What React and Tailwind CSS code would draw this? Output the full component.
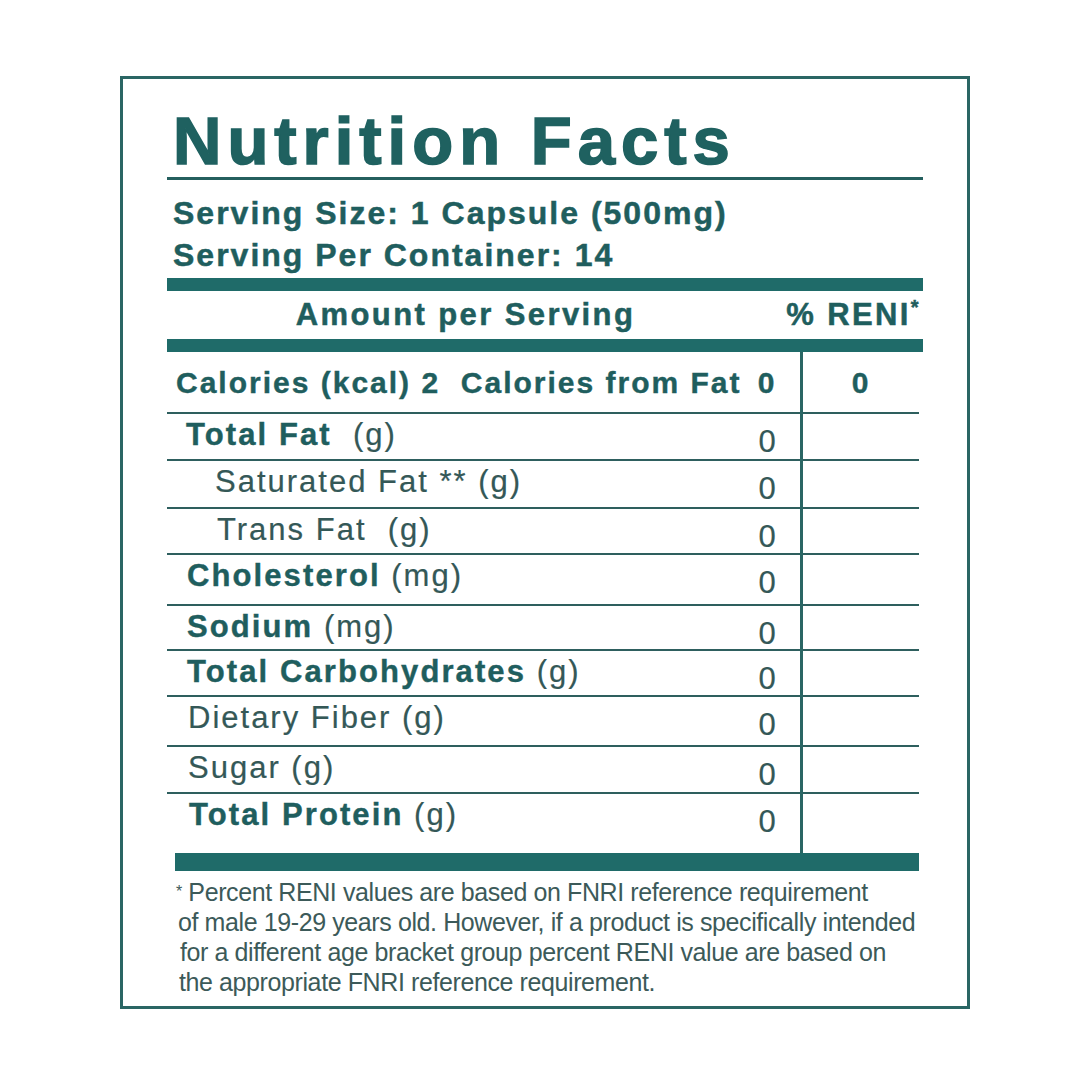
import React from 'react';

const rows = [
  { bold: 'Total Fat', rest: '  (g)', indent: 'pl-[19px]', h: 'h-[47px]' },
  { bold: '', rest: 'Saturated Fat ** (g)', indent: 'pl-[48px]', h: 'h-[48px]' },
  { bold: '', rest: 'Trans Fat  (g)', indent: 'pl-[50px]', h: 'h-[46px]' },
  { bold: 'Cholesterol', rest: ' (mg)', indent: 'pl-[20px]', h: 'h-[51px]' },
  { bold: 'Sodium', rest: ' (mg)', indent: 'pl-[20px]', h: 'h-[45px]' },
  { bold: 'Total Carbohydrates', rest: ' (g)', indent: 'pl-[20px]', h: 'h-[46px]' },
  { bold: '', rest: 'Dietary Fiber (g)', indent: 'pl-[21px]', h: 'h-[50px]' },
  { bold: '', rest: 'Sugar (g)', indent: 'pl-[21px]', h: 'h-[47px]' },
  { bold: 'Total Protein', rest: ' (g)', indent: 'pl-[22px]', h: 'h-[61px]' },
];

export default function App() {
  return (
    <div className="w-[1080px] h-[1080px] bg-white overflow-hidden font-['Liberation_Sans',Arial,sans-serif]">
      <div className="ml-[120px] mt-[76px] w-[850px] h-[933px] border-[3px] border-[#2a6664]">
        <div className="ml-[44px] w-[756px]">
          {/* Title */}
          <div className="pt-[30px] h-[98px] leading-[64px] text-[67px] font-bold tracking-[6px] text-[#1f6160] [-webkit-text-stroke:1.6px_#1f6160] pl-[6px] whitespace-nowrap">
            Nutrition Facts
          </div>
          <div className="h-[3px] bg-[#245f5e]" />

          {/* Serving info */}
          <div className="pt-[12px] pl-[6px] text-[32px] font-bold tracking-[2px] text-[#1f5e5e] [-webkit-text-stroke:0.5px_#1f5e5e] leading-[42px] whitespace-nowrap">
            <div>Serving Size: 1 Capsule (500mg)</div>
            <div>Serving Per Container: 14</div>
          </div>
          <div className="mt-[2px] h-[13px] bg-[#1f6b69]" />

          {/* Amount header */}
          <div className="h-[48px] flex items-center text-[31px] font-bold tracking-[2.4px] text-[#1f5e5e] [-webkit-text-stroke:0.5px_#1f5e5e] whitespace-nowrap">
            <div className="w-[593px] text-center pl-[4px]">Amount per Serving</div>
            <div className="flex-1 text-right pr-[2px]">
              % RENI<span className="text-[20px] align-top">*</span>
            </div>
          </div>
          <div className="h-[13px] bg-[#1f6b69]" />

          {/* Table */}
          <div className="flex">
            <div className="w-[636px] border-r-[3px] border-[#2a6664]">
              <div className="h-[60px] flex items-center pl-[9px] text-[30px] font-bold tracking-[2px] text-[#1f5e5e] [-webkit-text-stroke:0.4px_#1f5e5e] whitespace-nowrap">
                <span className="flex-1">Calories (kcal) 2&nbsp; Calories from Fat</span>
                <span className="w-[22px] mr-[22px] text-center">0</span>
              </div>
              {rows.map((r, i) => (
                <div
                  key={i}
                  className={`${r.h} border-t-2 border-[#2e5f5e] flex items-start ${r.indent} text-[31px] text-[#345857] [-webkit-text-stroke:0.2px_#345857] whitespace-pre`}
                >
                  <span className="flex-1 pt-[3px] leading-[36px]">
                    {r.bold && (
                      <span className="font-bold text-[#1f5e5e] tracking-[2.1px] [-webkit-text-stroke:0.4px_#1f5e5e]">{r.bold}</span>
                    )}
                    <span className="tracking-[2px]">{r.rest}</span>
                  </span>
                  <span className="w-[22px] mr-[22px] pt-[10px] leading-[36px] text-center">0</span>
                </div>
              ))}
            </div>
            <div className="flex-1">
              <div className="h-[60px] flex items-center justify-center pr-[6px] text-[30px] font-bold text-[#1f5e5e] [-webkit-text-stroke:0.4px_#1f5e5e]">0</div>
              {rows.map((r, i) => (
                <div key={i} className={`${r.h} border-t-2 border-[#2e5f5e] mr-[4px]`} />
              ))}
            </div>
          </div>
          <div className="ml-[8px] mr-[4px] h-[18px] bg-[#1f6b69]" />

          {/* Footnote */}
          <div className="pt-[6px] pl-[9px] text-[25px] leading-[30px] tracking-[-0.4px] text-[#3c5a59] whitespace-nowrap">
            <div><span className="text-[16px] align-top">*</span> Percent RENI values are based on FNRI reference requirement</div>
            <div className="pl-[2px]">of male 19-29 years old. However, if a product is specifically intended</div>
            <div className="pl-[4px]">for a different age bracket group percent RENI value are based on</div>
            <div className="pl-[3px]">the appropriate FNRI reference requirement.</div>
          </div>
        </div>
      </div>
    </div>
  );
}
